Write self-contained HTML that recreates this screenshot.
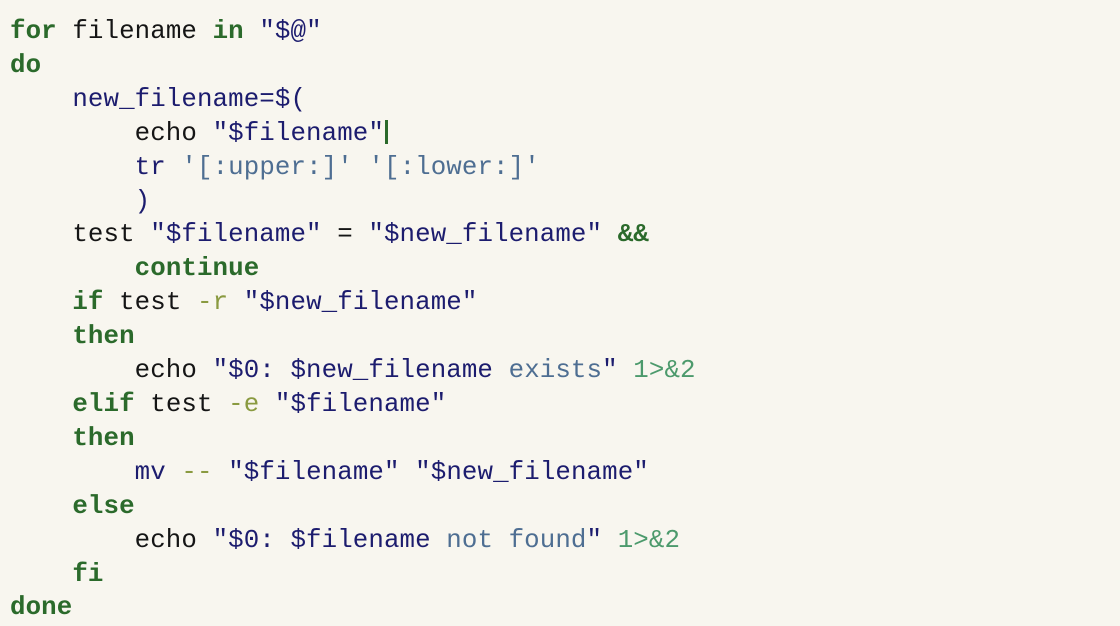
<!DOCTYPE html>
<html><head><meta charset="utf-8"><style>
html,body{margin:0;padding:0;background:#f8f6ef;width:1120px;height:626px;overflow:hidden}
pre{margin:0;position:absolute;left:10px;top:15px;font-family:"Liberation Mono",monospace;font-size:25.8px;letter-spacing:0.1px;line-height:33.9px;color:#151515}
.k{color:#2b6a2b;font-weight:bold}
.s{color:#1c1c6e}
.w{color:#4e6e92}
.n{color:#4c9a6c}
.o{color:#8a9a40}
.c{display:inline-block;width:3px;height:24px;background:#2b6a2b;vertical-align:-4px;margin-left:1px}
</style></head><body>
<pre><span class="k">for</span> filename <span class="k">in</span> <span class="s">"$@"</span>
<span class="k">do</span>
    <span class="s">new_filename=$(</span>
        echo <span class="s">"$filename"</span><span class="c"></span>
        <span class="s">tr</span> <span class="w">'[:upper:]'</span> <span class="w">'[:lower:]'</span>
        <span class="s">)</span>
    test <span class="s">"$filename"</span> = <span class="s">"$new_filename"</span> <span class="k">&amp;&amp;</span>
        <span class="k">continue</span>
    <span class="k">if</span> test <span class="o">-r</span> <span class="s">"$new_filename"</span>
    <span class="k">then</span>
        echo <span class="s">"$0: $new_filename </span><span class="w">exists</span><span class="s">"</span> <span class="n">1&gt;&amp;2</span>
    <span class="k">elif</span> test <span class="o">-e</span> <span class="s">"$filename"</span>
    <span class="k">then</span>
        <span class="s">mv</span> <span class="o">--</span> <span class="s">"$filename"</span> <span class="s">"$new_filename"</span>
    <span class="k">else</span>
        echo <span class="s">"$0: $filename </span><span class="w">not found</span><span class="s">"</span> <span class="n">1&gt;&amp;2</span>
    <span class="k">fi</span>
<span class="k">done</span></pre>
</body></html>
